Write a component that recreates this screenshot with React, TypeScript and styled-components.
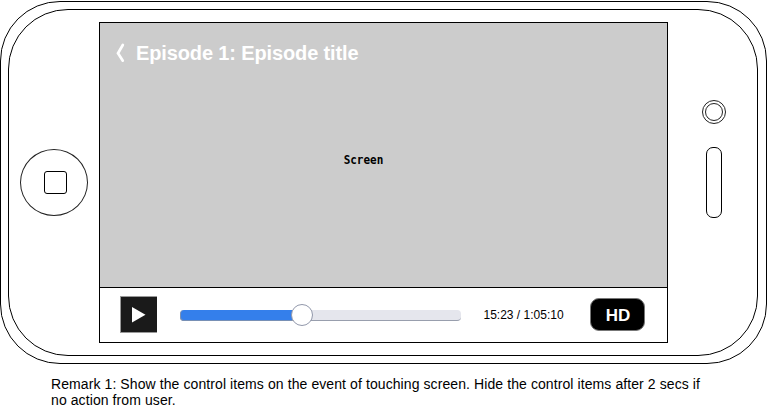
import React from "react";
import styled, { createGlobalStyle } from "styled-components";

const GlobalStyle = createGlobalStyle`
  *, *::before, *::after { box-sizing: border-box; }
  body {
    margin: 0;
    overflow: hidden;
    background: #fff;
    color: #000;
    font-family: "Liberation Sans", Arial, sans-serif;
  }
`;

const Page = styled.main`
  width: 767px;
  height: 411px;
  padding-top: 1px;
`;

const PhoneShell = styled.section`
  width: 767px;
  height: 363px;
  padding: 7px 8px 7px 7px;
  border: 1px solid #000;
  border-radius: 60px;
`;

const PhoneFace = styled.div`
  display: grid;
  grid-template-columns: 90px 569px 1fr;
  height: 347px;
  border: 1px solid #000;
  border-radius: 60px;
`;

const HomeSide = styled.div`
  padding: 139px 0 0 11px;
`;

const HomeButton = styled.button`
  display: flex;
  justify-content: center;
  align-items: center;
  width: 68px;
  height: 67px;
  padding: 0 0 0 3px;
  background: #fff;
  border: 1px solid #222;
  border-radius: 50%;
`;

const HomeMark = styled.span`
  width: 23px;
  height: 23px;
  border: 1px solid #000;
  border-radius: 3px;
`;

const SensorSide = styled.div`
  display: flex;
  flex-direction: column;
  align-items: center;
  gap: 23px;
  padding: 90px 0 0 3px;
`;

const Camera = styled.div`
  display: grid;
  place-items: center;
  width: 24px;
  height: 24px;
  border: 1px solid #222;
  border-radius: 50%;
`;

const Lens = styled.span`
  width: 18px;
  height: 18px;
  border: 1px solid #222;
  border-radius: 50%;
`;

const Speaker = styled.div`
  width: 16px;
  height: 71px;
  border: 1px solid #000;
  border-radius: 7px;
`;

const Display = styled.div`
  display: flex;
  flex-direction: column;
  height: 321px;
  margin-top: 12px;
  border: 1px solid #000;
`;

const Video = styled.div`
  height: 265px;
  background: #ccc;
  border-bottom: 1px solid #000;
`;

const TitleBar = styled.header`
  display: flex;
  align-items: center;
  gap: 10px;
  height: 60px;
  padding-left: 16px;
  color: #fff;
`;

const Title = styled.h1`
  margin: 0;
  font-size: 20px;
  line-height: 24px;
  letter-spacing: -0.13px;
  white-space: nowrap;
`;

const ScreenLabel = styled.p`
  margin: 70px 0 0;
  padding-right: 40px;
  font: bold 11px/16px "DejaVu Sans Mono", monospace;
  text-align: center;
  transform: scaleY(1.14);
`;

const Controls = styled.div`
  display: flex;
  align-items: center;
  height: 53px;
  padding-left: 20px;
`;

const PlayButton = styled.button`
  display: block;
  width: 37px;
  height: 37px;
  padding: 0;
  background: #1a1a1a;
  border: 0 solid #999;
  border-width: 1px 0 1px 1px;
`;

const Track = styled.div`
  display: flex;
  align-items: flex-start;
  width: 281px;
  height: 11px;
  margin: 1px 0 0 23px;
  background: #e5e6ed;
  border-bottom: 1px solid #989ead;
  border-radius: 4px;
`;

const Progress = styled.div`
  width: 112px;
  height: 11px;
  background: #347feb;
  border: 0 solid #7890b5;
  border-width: 0 0 1px 1px;
  border-radius: 4px 0 0 4px;
`;

const Thumb = styled.span`
  width: 22px;
  height: 22px;
  margin: -6px 0 0 -1px;
  background: #fff;
  border: 1px solid #9298ab;
  border-radius: 50%;
`;

const Time = styled.span`
  width: 107px;
  padding: 1px 0 0 22.5px;
  font-size: 12px;
  line-height: 14px;
  white-space: nowrap;
`;

const Quality = styled.button`
  width: 55px;
  height: 33px;
  margin-left: 22px;
  padding: 2px 0 0 1px;
  background: #000;
  border: 1px solid #777;
  border-radius: 9px;
  color: #fff;
  font: bold 17px/20px "Liberation Sans", Arial, sans-serif;
`;

const Remark = styled.p`
  width: 655px;
  margin: 12px 0 0 51px;
  font-size: 14px;
  line-height: 16px;
  letter-spacing: 0.09px;
`;

export default function App() {
  return (
    <>
      <GlobalStyle />
      <Page>
        <PhoneShell>
          <PhoneFace>
            <HomeSide>
              <HomeButton aria-label="Home"><HomeMark /></HomeButton>
            </HomeSide>
            <Display>
              <Video>
                <TitleBar>
                  <svg width="10" height="20" viewBox="0 0 10 20" fill="none">
                    <path d="M6.8 2 2 10.2l4.8 7.5" stroke="#fff" strokeWidth="2.7" strokeLinecap="round" />
                  </svg>
                  <Title>Episode 1: Episode title</Title>
                </TitleBar>
                <ScreenLabel>Screen</ScreenLabel>
              </Video>
              <Controls>
                <PlayButton aria-label="Play">
                  <svg width="36" height="35" viewBox="0 0 36 35" display="block">
                    <path d="M11 10v15.5l13.5-7.7z" fill="#fff" />
                  </svg>
                </PlayButton>
                <Track>
                  <Progress />
                  <Thumb />
                </Track>
                <Time>15:23 / 1:05:10</Time>
                <Quality>HD</Quality>
              </Controls>
            </Display>
            <SensorSide>
              <Camera><Lens /></Camera>
              <Speaker />
            </SensorSide>
          </PhoneFace>
        </PhoneShell>
        <Remark>
          Remark 1: Show the control items on the event of touching screen. Hide the control items after 2 secs if
          no action from user.
        </Remark>
      </Page>
    </>
  );
}
